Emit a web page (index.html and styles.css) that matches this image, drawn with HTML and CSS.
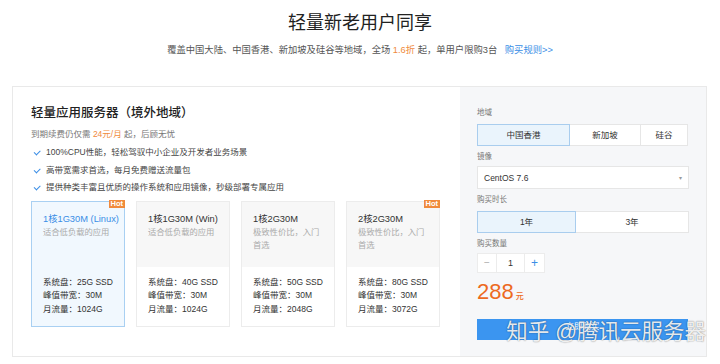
FILE: index.html
```html
<!DOCTYPE html>
<html lang="zh-CN">
<head>
    <meta charset="UTF-8">
    <meta name="viewport" content="width=device-width, initial-scale=1.0">
    <title>轻量新老用户同享</title>
    <link rel="stylesheet" href="styles.css">
</head>
<body>
    <div class="top">
        <h1>轻量新老用户同享</h1>
        <p class="sub">覆盖中国大陆、中国香港、新加坡及硅谷等地域，全场 <span class="orange">1.6折</span> 起，单用户限购3台 <a class="rule" href="#">购买规则&gt;&gt;</a></p>
    </div>

    <div class="panel">
        <div class="left">
            <h2>轻量应用服务器（境外地域）</h2>
            <p class="renew">到期续费仍仅需 <span class="orange">24元/月</span> 起，后顾无忧</p>
            <ul class="checks">
                <li><span class="tick"></span>100%CPU性能，轻松驾驭中小企业及开发者业务场景</li>
                <li><span class="tick"></span>高带宽需求首选，每月免费赠送流量包</li>
                <li><span class="tick"></span>提供种类丰富且优质的操作系统和应用镜像，秒级部署专属应用</li>
            </ul>

            <div class="cards">
                <div class="card active">
                    <span class="hot">Hot</span>
                    <div class="card-head">
                        <div class="card-title">1核1G30M (Linux)</div>
                        <div class="card-desc">适合低负载的应用</div>
                    </div>
                    <div class="card-body">
                        <div>系统盘：25G SSD</div>
                        <div>峰值带宽：30M</div>
                        <div>月流量：1024G</div>
                    </div>
                </div>
                <div class="card">
                    <div class="card-head">
                        <div class="card-title">1核1G30M (Win)</div>
                        <div class="card-desc">适合低负载的应用</div>
                    </div>
                    <div class="card-body">
                        <div>系统盘：40G SSD</div>
                        <div>峰值带宽：30M</div>
                        <div>月流量：1024G</div>
                    </div>
                </div>
                <div class="card">
                    <div class="card-head">
                        <div class="card-title">1核2G30M</div>
                        <div class="card-desc">极致性价比，入门首选</div>
                    </div>
                    <div class="card-body">
                        <div>系统盘：50G SSD</div>
                        <div>峰值带宽：30M</div>
                        <div>月流量：2048G</div>
                    </div>
                </div>
                <div class="card">
                    <span class="hot">Hot</span>
                    <div class="card-head">
                        <div class="card-title">2核2G30M</div>
                        <div class="card-desc">极致性价比，入门首选</div>
                    </div>
                    <div class="card-body">
                        <div>系统盘：80G SSD</div>
                        <div>峰值带宽：30M</div>
                        <div>月流量：3072G</div>
                    </div>
                </div>
            </div>
        </div>

        <div class="right">
            <div class="label">地域</div>
            <div class="seg">
                <div class="opt selected w92">中国香港</div>
                <div class="opt w71">新加坡</div>
                <div class="opt w48">硅谷</div>
            </div>

            <div class="label">镜像</div>
            <div class="select">
                <span>CentOS 7.6</span>
                <span class="caret">&#9662;</span>
            </div>

            <div class="label">购买时长</div>
            <div class="seg">
                <div class="opt selected w98">1年</div>
                <div class="opt w113">3年</div>
            </div>

            <div class="label">购买数量</div>
            <div class="stepper">
                <div class="step minus">&minus;</div>
                <div class="step num">1</div>
                <div class="step plus">+</div>
            </div>

            <div class="price">288<span class="unit">元</span></div>

            <button class="buy">立即购买</button>
        </div>

        <div class="watermark">知乎 @腾讯云服务器</div>
    </div>
</body>
</html>
```

FILE: styles.css
```css
body {
    margin: 0;
    background: #fff;
    color: #333;
    font-family: "Liberation Sans", "Noto Sans CJK SC", sans-serif;
}

.orange { color: #f08a3c; }

/* Header */
.top {
    text-align: center;
    padding-top: 10px;
}
.top h1 {
    margin: 0;
    font-size: 18px;
    line-height: 26px;
    font-weight: 400;
    color: #222;
}
.sub {
    margin: 7px 0 0;
    font-size: 9.3px;
    line-height: 14px;
    color: #555;
}
.rule {
    color: #3a8ee6;
    text-decoration: none;
    margin-left: 5px;
}

/* Panel */
.panel {
    position: relative;
    display: flex;
    margin: 29px 13px 0 12px;
    height: 269px;
    border: 1px solid #e9e9e9;
}

.left {
    width: 429px;
    padding: 17px 0 0 18px;
}
.left h2 {
    margin: 0;
    font-size: 12.5px;
    line-height: 18px;
    font-weight: 500;
    color: #222;
}
.renew {
    margin: 5px 0 0;
    font-size: 8.5px;
    line-height: 14px;
    color: #777;
}
.checks {
    list-style: none;
    margin: 3px 0 0;
    padding: 0;
    font-size: 8.5px;
    line-height: 17.5px;
    color: #444;
}
.tick {
    display: inline-block;
    width: 5px;
    height: 2.5px;
    border-left: 1.3px solid #3a8ee6;
    border-bottom: 1.3px solid #3a8ee6;
    transform: rotate(-45deg);
    margin: 0 6px 2px 3px;
    vertical-align: middle;
}

/* Plan cards */
.cards {
    display: flex;
    gap: 11px;
    margin-top: 4px;
}
.card {
    position: relative;
    width: 92px;
    height: 124px;
    border: 1px solid #ececec;
    background: #fff;
}
.card.active {
    border-color: #a9d0f2;
    background: #f1f8fe;
}
.card-head {
    height: 55px;
    padding: 10px 8px 0 11px;
    background: #f7f7f7;
}
.card.active .card-head { background: transparent; }
.card-title {
    font-size: 9.3px;
    line-height: 14px;
    color: #333;
    white-space: nowrap;
}
.card.active .card-title { color: #3a8ee6; }
.card-desc {
    margin-top: 0.5px;
    font-size: 8.3px;
    line-height: 12.5px;
    color: #aaa;
}
.card-body {
    padding: 9px 0 0 11px;
    font-size: 8.5px;
    line-height: 13.5px;
    color: #333;
}
.hot {
    position: absolute;
    top: -2px;
    right: -1px;
    background: #f08a3c;
    color: #fff;
    font-size: 7.5px;
    line-height: 8px;
    padding: 0 2px;
    font-weight: 600;
}

/* Order form */
.right {
    flex: 1;
    background: #f6f7f9;
    padding: 20px 17px 0 17px;
}
.label {
    font-size: 7.5px;
    line-height: 12px;
    color: #777;
    margin-top: 5px;
}
.right .label:first-child { margin-top: 0; }
.seg {
    display: flex;
    margin-top: 5px;
    height: 22px;
}
.opt {
    box-sizing: border-box;
    height: 22px;
    line-height: 20px;
    text-align: center;
    font-size: 8.5px;
    color: #333;
    background: #fff;
    border: 1px solid #e6e6e6;
    margin-left: -1px;
}
.opt:first-child { margin-left: 0; }
.opt.selected {
    background: #eaf4fc;
    border-color: #a9cdee;
    position: relative;
}
.w92 { width: 93px; }
.w71 { width: 72px; }
.w48 { width: 48px; }
.w98 { width: 99px; }
.w113 { width: 114px; }

.select {
    box-sizing: border-box;
    display: flex;
    justify-content: space-between;
    align-items: center;
    height: 23px;
    margin-top: 3px;
    padding: 0 6px 0 6px;
    background: #fff;
    border: 1px solid #e6e6e6;
    font-size: 8.5px;
    color: #333;
}
.caret {
    font-size: 6px;
    color: #999;
}

.stepper {
    display: flex;
    margin-top: 3px;
}
.step {
    box-sizing: border-box;
    height: 20px;
    line-height: 18px;
    text-align: center;
    background: #fff;
    border: 1px solid #ececec;
    font-size: 10px;
}
.minus { width: 20px; color: #aaa; }
.num { width: 29px; margin-left: -1px; color: #333; font-size: 9px; }
.plus { width: 21px; margin-left: -1px; color: #3a8ee6; font-size: 12px; }

.price {
    margin-top: 7px;
    font-size: 22px;
    line-height: 24px;
    font-weight: 500;
    color: #ed6a1f;
}
.unit {
    font-size: 8px;
    margin-left: 2px;
}

.buy {
    display: block;
    width: 211px;
    height: 21px;
    margin-top: 10px;
    border: none;
    background: #3b95f0;
    color: #fff;
    font-family: inherit;
    font-size: 8.5px;
    line-height: 12px;
    padding: 0 0 8px;
}

.watermark {
    position: absolute;
    right: 0;
    bottom: 11px;
    font-size: 21.5px;
    line-height: 26px;
    color: rgba(255, 255, 255, 0.9);
    text-shadow: 0 0 1px rgba(0, 0, 0, 0.45), 0 0 2px rgba(0, 0, 0, 0.2);
    white-space: nowrap;
}
```
